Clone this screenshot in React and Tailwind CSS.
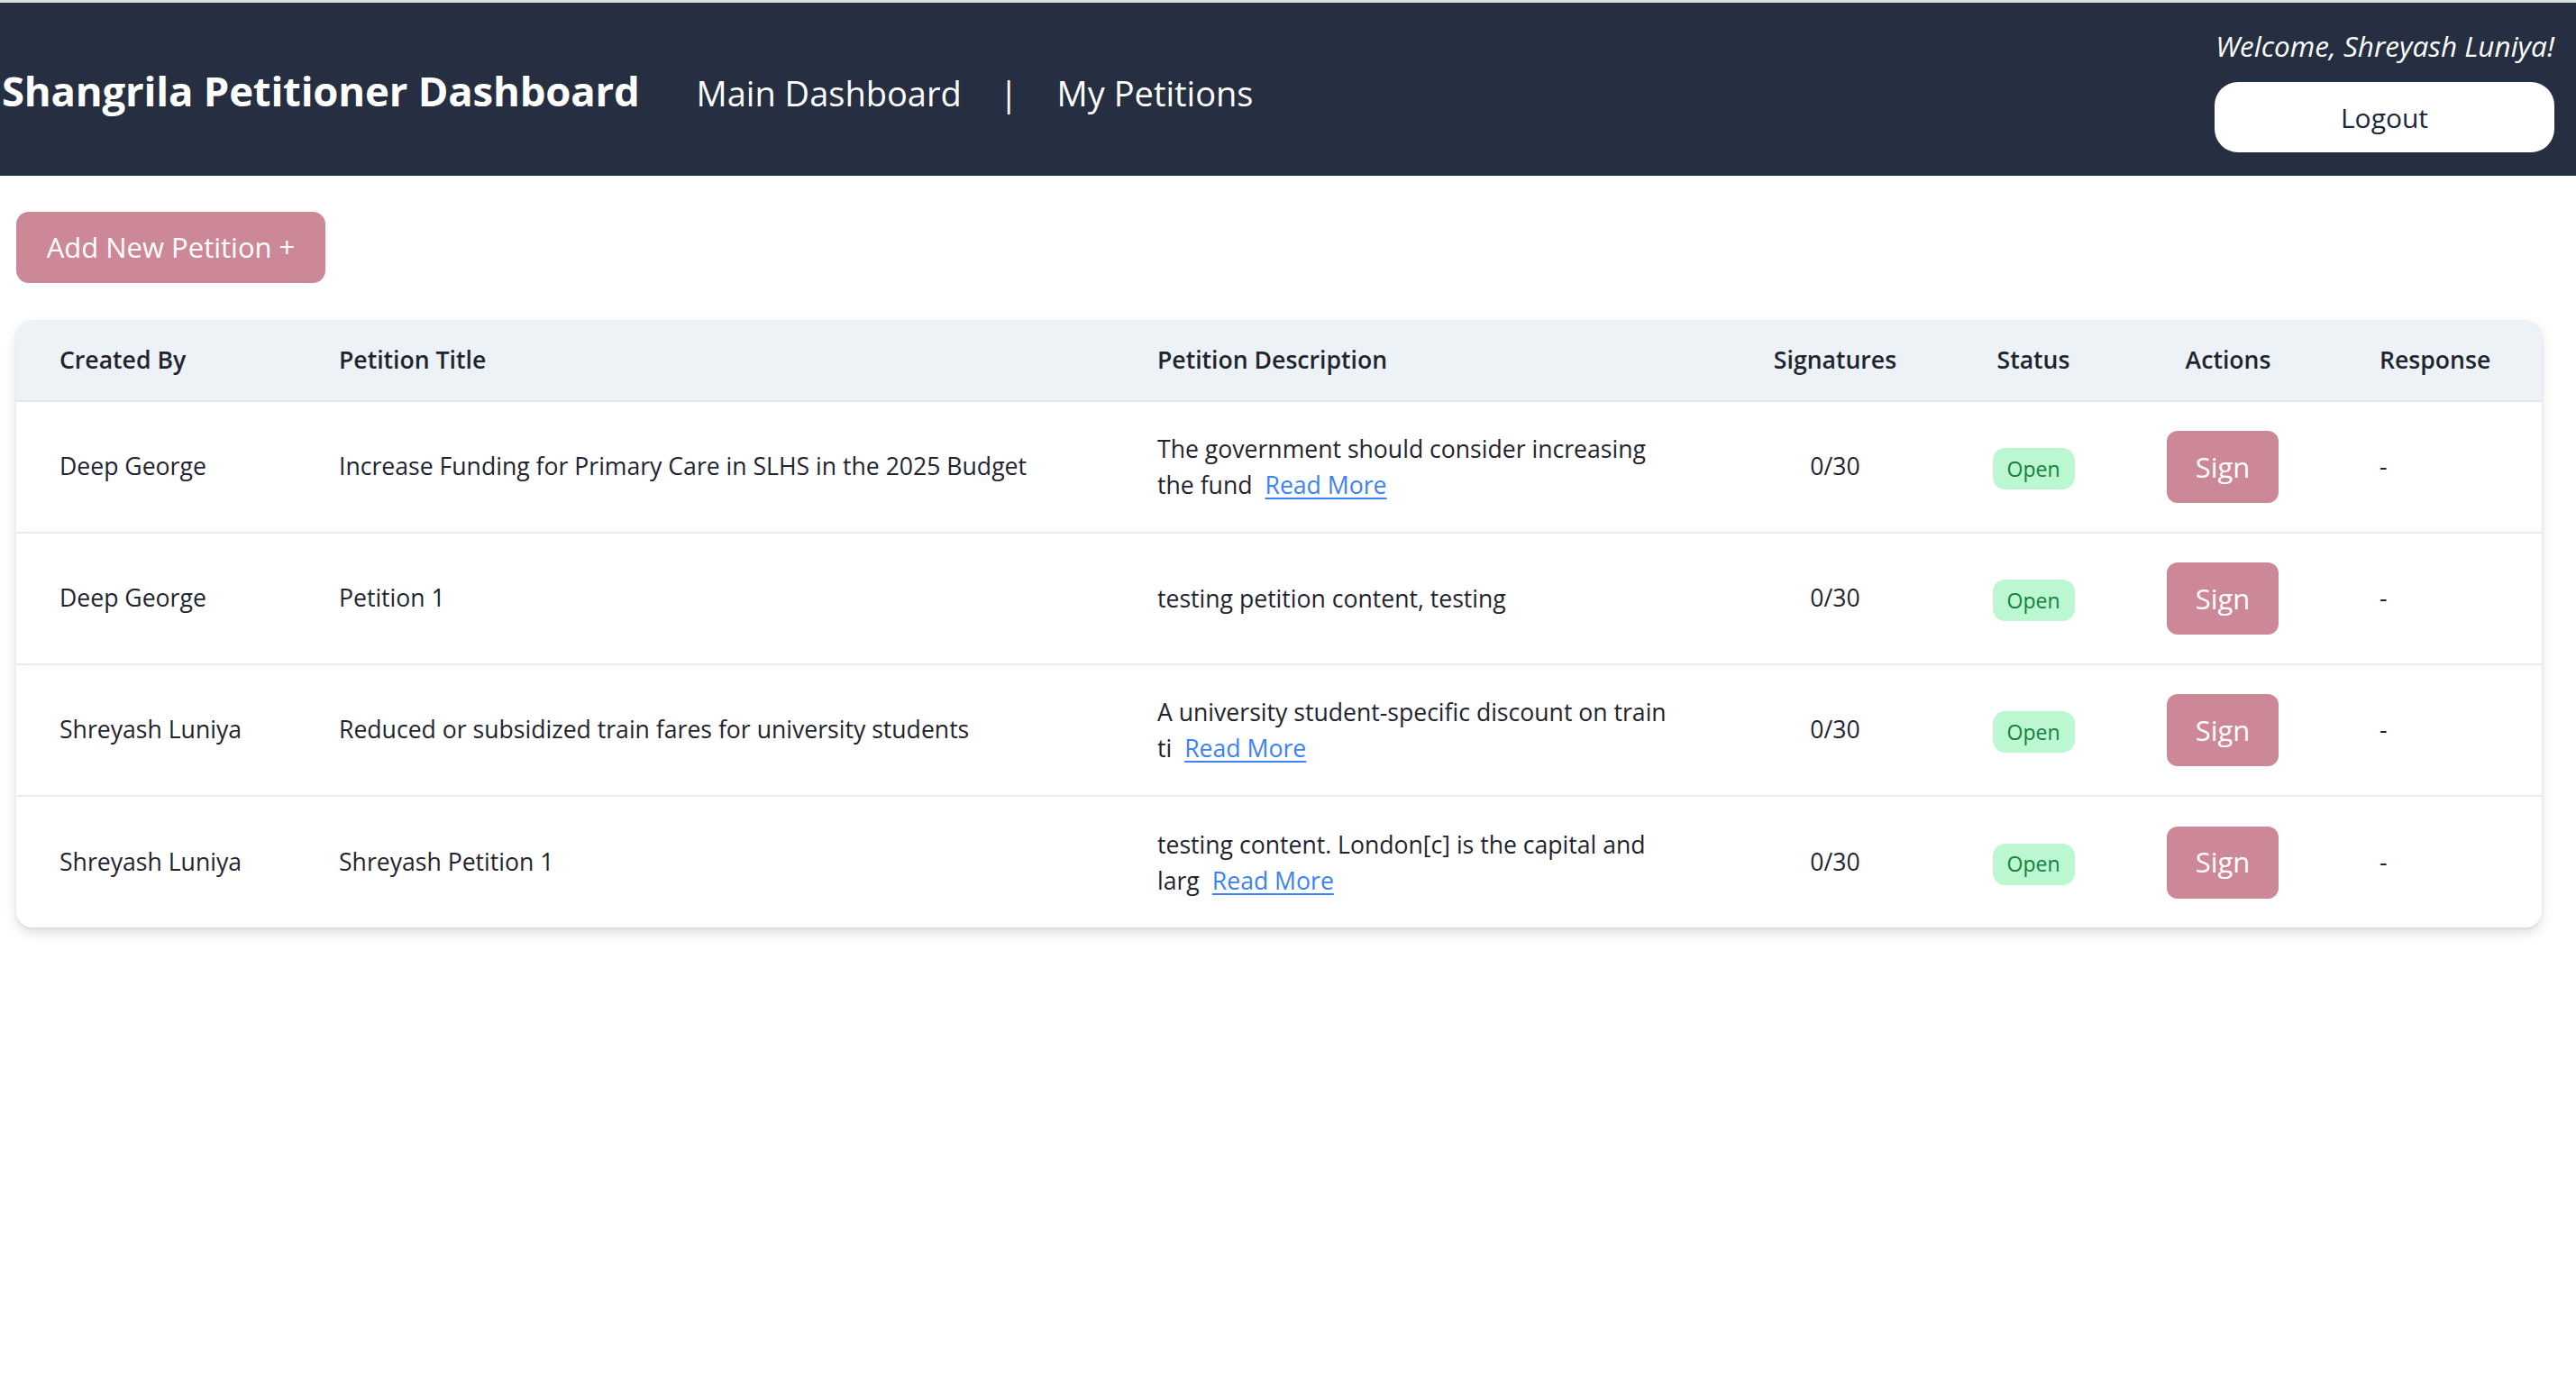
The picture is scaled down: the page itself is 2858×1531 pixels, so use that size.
import React from 'react';

const petitions = [
  {
    author: 'Deep George',
    title: 'Increase Funding for Primary Care in SLHS in the 2025 Budget',
    desc: 'The government should consider increasing the fund',
    more: true,
  },
  {
    author: 'Deep George',
    title: 'Petition 1',
    desc: 'testing petition content, testing',
    more: false,
  },
  {
    author: 'Shreyash Luniya',
    title: 'Reduced or subsidized train fares for university students',
    desc: 'A university student-specific discount on train ti',
    more: true,
  },
  {
    author: 'Shreyash Luniya',
    title: 'Shreyash Petition 1',
    desc: 'testing content. London[c] is the capital and larg',
    more: true,
  },
];

function Header() {
  return (
    <header className="border-t-[3px] border-[#dcdde0] bg-[#262f41] h-[195px] flex items-center justify-between pl-[2px] pr-[24px]">
      <div className="flex items-center">
        <h1 className="text-white font-bold text-[45.5px] tracking-[-0.2px] mt-[2px]">Shangrila Petitioner Dashboard</h1>
        <nav className="flex items-center ml-[63px] mt-[8px] text-white text-[38px]">
          <a href="#" className="hover:underline">Main Dashboard</a>
          <span className="ml-[42px] mr-[43px]">|</span>
          <a href="#" className="hover:underline">My Petitions</a>
        </nav>
      </div>
      <div className="flex flex-col items-end mt-[2px]">
        <p className="text-white italic text-[31.5px] leading-[40px]">Welcome, Shreyash Luniya!</p>
        <button className="mt-[20px] w-[377px] h-[78px] bg-white rounded-[26px] text-[#1c2541] text-[30px]">
          Logout
        </button>
      </div>
    </header>
  );
}

function Row({ p, last }) {
  return (
    <tr className={last ? '' : 'border-b-2 border-[#e8ecf1]'}>
      <td className="h-[146px] px-[48px] align-middle">{p.author}</td>
      <td className="px-[48px] align-middle">{p.title}</td>
      <td className="px-[48px] align-middle">
        <div className="max-w-[578px] leading-[40px]">
          {p.desc}
          {p.more && (
            <a href="#" className="ml-[14px] text-[#3b82f6] underline underline-offset-4">Read More</a>
          )}
        </div>
      </td>
      <td className="text-center align-middle">0/30</td>
      <td className="text-center align-middle">
        <span className="inline-flex items-center justify-center w-[91px] h-[46px] mt-[4px] rounded-[14px] bg-[#bbf7d0] text-[#15803d] text-[23px]">
          Open
        </span>
      </td>
      <td className="text-center align-middle">
        <button className="w-[124px] h-[80px] rounded-[12px] bg-[#cd8898] text-white text-[31px] mr-[12px]">Sign</button>
      </td>
      <td className="pl-[56px] align-middle">-</td>
    </tr>
  );
}

export default function App() {
  return (
    <div className="min-h-screen bg-white text-[#1f2430]" style={{ fontFamily: '"Open Sans", "Noto Sans", sans-serif' }}>
      <Header />
      <main className="px-[18px] pt-[40px] pr-[38px]">
        <button className="h-[79px] w-[343px] rounded-[14px] bg-[#cd8898] text-white text-[31px]">
          Add New Petition +
        </button>
        <div className="mt-[41px] rounded-[18px] overflow-hidden bg-white shadow-[0_6px_14px_rgba(0,0,0,0.12),0_2px_4px_rgba(0,0,0,0.06)]">
          <table className="w-full table-fixed text-[26.6px]">
            <colgroup>
              <col className="w-[310px]" />
              <col className="w-[908px]" />
              <col className="w-[684px]" />
              <col className="w-[232px]" />
              <col className="w-[208px]" />
              <col className="w-[224px]" />
              <col className="w-[236px]" />
            </colgroup>
            <thead className="bg-[#edf2f7]">
              <tr className="border-b-2 border-[#e3e8ee]">
                <th className="h-[90px] px-[48px] text-left font-semibold">Created By</th>
                <th className="px-[48px] text-left font-semibold">Petition Title</th>
                <th className="px-[48px] text-left font-semibold">Petition Description</th>
                <th className="text-center font-semibold">Signatures</th>
                <th className="text-center font-semibold">Status</th>
                <th className="text-center font-semibold">Actions</th>
                <th className="pl-[56px] text-left font-semibold">Response</th>
              </tr>
            </thead>
            <tbody>
              {petitions.map((p, i) => (
                <Row key={i} p={p} last={i === petitions.length - 1} />
              ))}
            </tbody>
          </table>
        </div>
      </main>
    </div>
  );
}
